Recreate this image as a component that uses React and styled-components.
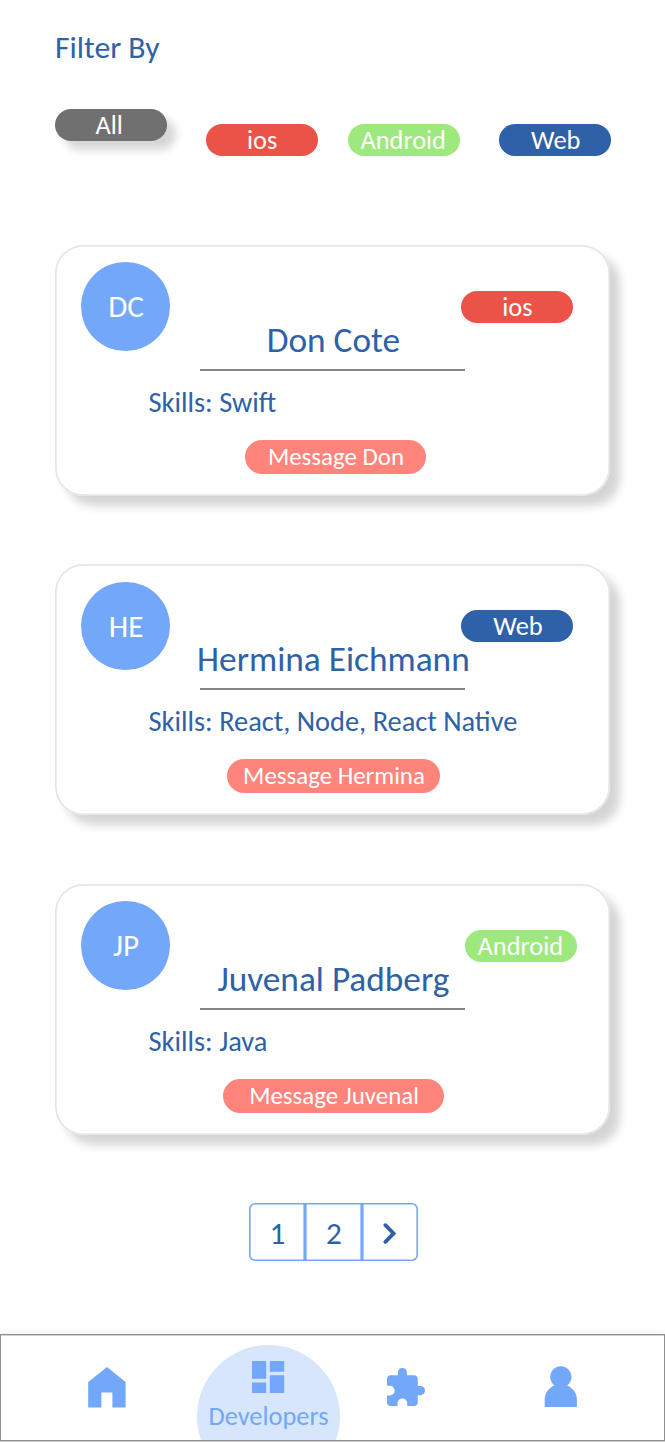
import React from "react";
import styled, { createGlobalStyle } from "styled-components";

const GlobalStyle = createGlobalStyle`
  *, *::before, *::after { box-sizing: border-box; }
  body {
    margin: 0;
    background: #fff;
    font-family: Carlito, Calibri, Lato, "Liberation Sans", sans-serif;
    color: #2e61a8;
  }
  button { font: inherit; border: 0; margin: 0; padding: 0; background: none; color: inherit; }
`;

const Screen = styled.div`
  width: 665px;
  height: 1442px;
  display: flex;
  flex-direction: column;
  overflow: hidden;
`;

const Label = styled.span`
  display: block;
  white-space: nowrap;
`;

const Title = styled.h1`
  margin: 0;
  padding: 32px 0 0 55px;
  height: 109.3px;
  font-size: 31.7px;
  line-height: 32px;
  font-weight: 400;
`;

const Filters = styled.div`
  display: flex;
  align-items: flex-end;
  height: 46.5px;
  padding-left: 54.7px;
`;

const pillColors = { All: "#707070", ios: "#eb5348", Android: "#9de97d", Web: "#2e61a8" };
const pillPadding = { All: "0 3px 0 0", ios: "0 0 0 1px", Android: "0 1px 0 0", Web: "0 0 0 2px" };

const Pill = styled.button`
  flex: none;
  display: flex;
  justify-content: center;
  width: 112px;
  height: 32px;
  padding: ${(p) => pillPadding[p.$kind]};
  border-radius: 16px;
  background: ${(p) => pillColors[p.$kind]};
  color: #fff;
  font-size: 26.4px;
  line-height: 33px;
  margin-left: ${(p) => p.$left || 0}px;
  ${(p) => p.$raised && "align-self: flex-start; box-shadow: 9px 9px 9px rgba(0, 0, 0, 0.16);"}
`;

const CardList = styled.main`
  display: flex;
  flex-direction: column;
  gap: 68.5px;
  padding: 89.2px 55px 0;
`;

const Card = styled.article`
  display: flex;
  flex-direction: column;
  width: 555px;
  height: 251px;
  border-radius: 28px;
  background: #fff;
  box-shadow: inset 0 0 0 1.7px #e6e6e6, 10px 10px 10px rgba(0, 0, 0, 0.17);
`;

const CardHeader = styled.header`
  display: flex;
  align-items: flex-start;
  height: 125.7px;
  padding: 17.2px 0 0 26.3px;
`;

const Avatar = styled.div`
  flex: none;
  display: flex;
  justify-content: center;
  width: 88.6px;
  height: 88.6px;
  padding-left: 1px;
  border-radius: 50%;
  background: #73a7fa;
  color: #fff;
  font-size: 31.2px;
  line-height: 88.4px;
`;

const NameBlock = styled.h2`
  flex: none;
  display: flex;
  justify-content: center;
  align-self: flex-end;
  width: 265px;
  height: 49px;
  margin: 0 0 0 30px;
  padding-left: 2px;
  border-bottom: 2px solid #858585;
  font-size: 35.3px;
  line-height: 35.2px;
  font-weight: 400;
`;

const TagSlot = styled.div`
  padding-top: 28.4px;
`;

const Skills = styled.p`
  margin: 0;
  padding: 17px 0 0 93.5px;
  font-size: 28.4px;
  line-height: 30px;
`;

const MessageButton = styled.button`
  display: flex;
  justify-content: center;
  width: ${(p) => p.$width}px;
  height: 34px;
  margin: 22px 0 0 ${(p) => p.$left}px;
  padding-left: 1px;
  border-radius: 17px;
  background: #ff847b;
  color: #fff;
  font-size: 24.9px;
  line-height: 33.6px;
`;

const Pager = styled.nav`
  display: flex;
  align-self: center;
  margin: 68.2px 0 0 2px;
`;

const PageCell = styled.button`
  display: flex;
  align-items: center;
  justify-content: center;
  width: 56.6px;
  height: 58px;
  padding: 1px 0 0 1px;
  box-shadow: inset 0 0 0 1.6px #73a7fa;
  font-size: 31.2px;
  &:first-child { border-radius: 6px 0 0 6px; }
  &:last-child { border-radius: 0 6px 6px 0; padding: 3px 0 0; }
`;

const TabBar = styled.nav`
  display: flex;
  height: 107px;
  margin-top: auto;
  margin-bottom: 1px;
  border: 1px solid #8f8f8f;
  box-shadow: 0 -2px 6px rgba(0, 0, 0, 0.05), 0 1px 0 #cfcfcf, inset 0 1px 0 #d4d4d4;
  overflow: hidden;
`;

const Tab = styled.button`
  flex: none;
  width: ${(p) => p.$width}px;
  padding-top: ${(p) => p.$top}px;
  padding-left: ${(p) => p.$left}px;
  display: flex;
  align-items: flex-start;
`;

const ActiveTab = styled.button`
  flex: none;
  display: flex;
  flex-direction: column;
  align-items: center;
  width: 143px;
  height: 143px;
  margin-top: 10px;
  padding-top: 16px;
  border-radius: 50%;
  background: #d8e6fc;
  color: #73a7fa;
  font-size: 26.4px;
  line-height: 30px;
`;

const Icon = styled.svg`
  display: block;
  flex: none;
  fill: #73a7fa;
`;

const TabText = styled.div`
  padding-top: 8px;
`;

const filters = [
  { kind: "All", raised: true },
  { kind: "ios", left: 39 },
  { kind: "Android", left: 30 },
  { kind: "Web", left: 39 },
];

const people = [
  { initials: "DC", first: "Don", name: "Don Cote", kind: "ios", skills: "Swift", width: 181, left: 190, tagLeft: -4 },
  { initials: "HE", first: "Hermina", name: "Hermina Eichmann", kind: "Web", skills: "React, Node, React Native", width: 213, left: 172, tagLeft: -4 },
  { initials: "JP", first: "Juvenal", name: "Juvenal Padberg", kind: "Android", skills: "Java", width: 220.5, left: 168.3, tagLeft: 0 },
];

function DeveloperCard({ person }) {
  return (
    <Card>
      <CardHeader>
        <Avatar><Label>{person.initials}</Label></Avatar>
        <NameBlock><Label>{person.name}</Label></NameBlock>
        <TagSlot>
          <Pill as="div" $kind={person.kind} $left={person.tagLeft}>
            <Label>{person.kind}</Label>
          </Pill>
        </TagSlot>
      </CardHeader>
      <Skills><Label>Skills: {person.skills}</Label></Skills>
      <MessageButton $width={person.width} $left={person.left}>
        <Label>Message {person.first}</Label>
      </MessageButton>
    </Card>
  );
}

export default function App() {
  return (
    <Screen>
      <GlobalStyle />
      <Title><Label>Filter By</Label></Title>
      <Filters>
        {filters.map((f) => (
          <Pill key={f.kind} $kind={f.kind} $left={f.left} $raised={f.raised}>
            <Label>{f.kind}</Label>
          </Pill>
        ))}
      </Filters>
      <CardList>
        {people.map((p) => <DeveloperCard key={p.initials} person={p} />)}
      </CardList>
      <Pager>
        <PageCell>1</PageCell>
        <PageCell>2</PageCell>
        <PageCell aria-label="Next page">
          <svg width="14" height="22" viewBox="0 0 14 22" fill="none" stroke="#2e61a8" strokeWidth="3.8" strokeLinecap="round" strokeLinejoin="miter">
            <path d="M2.4 2.2 L10.6 10.4 L2.4 18.8" />
          </svg>
        </PageCell>
      </Pager>
      <TabBar>
        <Tab $width={196} $left={87} $top={32} aria-label="Home">
          <Icon width="38" height="41" viewBox="0 0 38 41">
            <path d="M19 0 L37.6 15 V40.6 H24.4 V25.4 H13.4 V40.6 H0.2 V15 Z" />
          </Icon>
        </Tab>
        <ActiveTab>
          <Icon width="34" height="32" viewBox="0 0 34 32">
            <path d="M0 0H14.2V17.8H0ZM17.8 0H32.2V10.7H17.8ZM17.8 14.3H32.2V32H17.8ZM0 21.4H14.2V32H0Z" />
          </Icon>
          <TabText><Label>Developers</Label></TabText>
        </ActiveTab>
        <Tab $width={156} $left={46.5} $top={33} aria-label="Projects">
          <Icon width="38" height="38" viewBox="2 1 21 21">
            <path d="M20.5 11H19V7c0-1.1-.9-2-2-2h-4V3.5C13 2.12 11.88 1 10.5 1S8 2.12 8 3.5V5H4c-1.1 0-1.99.9-1.99 2v3.8H3.5c1.49 0 2.7 1.21 2.7 2.7s-1.21 2.7-2.7 2.7H2V20c0 1.1.9 2 2 2h3.8v-1.5c0-1.49 1.21-2.7 2.7-2.7 1.49 0 2.7 1.21 2.7 2.7V22H17c1.1 0 2-.9 2-2v-4h1.5c1.38 0 2.5-1.12 2.5-2.5S21.88 11 20.5 11z" />
          </Icon>
        </Tab>
        <Tab $width={168} $left={48} $top={31} aria-label="Profile">
          <Icon width="34" height="41" viewBox="0 0 34 41">
            <path d="M10.4 19.4 A10.7 10.7 0 1 1 23.2 19.4 C29 22 32.9 27 32.9 33.4 V41 H0.7 V33.4 C0.7 27 4.6 22 10.4 19.4 Z" />
          </Icon>
        </Tab>
      </TabBar>
    </Screen>
  );
}
